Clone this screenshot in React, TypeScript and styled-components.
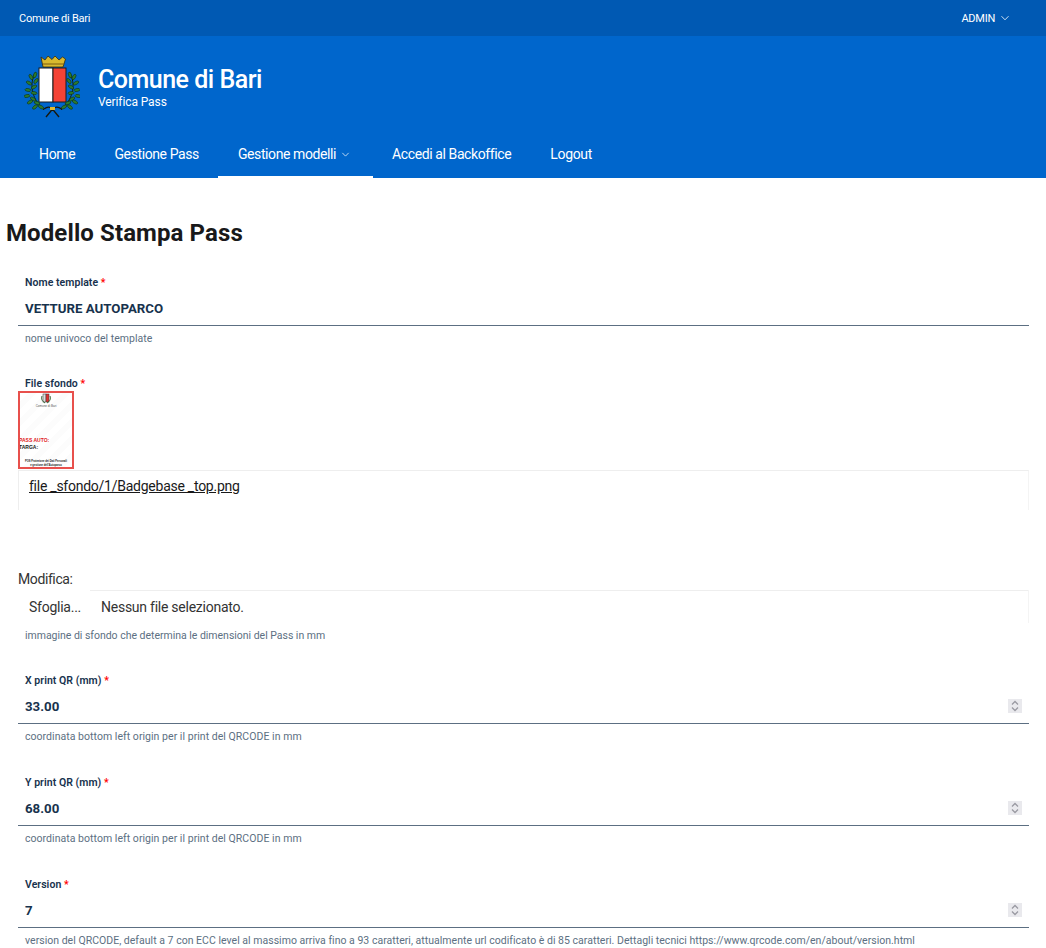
import React from 'react';
import styled, { createGlobalStyle } from 'styled-components';

const GlobalStyle = createGlobalStyle`
  html, body { margin: 0; padding: 0; background: #fff; }
  body {
    font-family: Roboto, "Open Sans", sans-serif;
    color: #19191a;
    height: 948px;
    overflow: hidden;
  }
`;

const SlimBar = styled.div`
  height: 36px;
  background: #0059b3;
  display: flex;
  align-items: center;
  justify-content: space-between;
  padding: 0 36px 0 19px;
  color: #fff;
  font-size: 11px;
  letter-spacing: -0.25px;
`;
const UserMenu = styled.div`
  display: flex;
  align-items: center;
  gap: 5px;
`;
const Brand = styled.div`
  height: 100px;
  background: #0066cc;
  display: flex;
  align-items: center;
  padding-left: 24px;
  gap: 18px;
  color: #fff;
`;
const BrandTitle = styled.div`
  font-size: 25px;
  font-weight: 500;
  line-height: 32px;
  letter-spacing: -0.5px;
  padding-top: 1px;
  margin-bottom: -1px;
`;
const BrandSub = styled.div`
  font-size: 12px;
  line-height: 14px;
  letter-spacing: -0.1px;
`;
const Nav = styled.nav`
  height: 42px;
  background: #0066cc;
  display: flex;
  padding-left: 19.5px;
`;
const NavItem = styled.a<{ $active?: boolean; $tight?: boolean }>`
  display: flex;
  align-items: center;
  gap: 5px;
  padding: 0 19.5px 4px;
  color: #fff;
  font-size: 14px;
  letter-spacing: ${({ $tight }) => ($tight ? '-0.4px' : '-0.3px')};
  border-bottom: 2px solid ${({ $active }) => ($active ? '#fff' : 'transparent')};
`;
const NavCaret = styled.span`
  display: flex;
  margin-right: 3px;
`;
const Main = styled.main`
  padding: 0 17px 0 18px;
`;
const Title = styled.h1`
  font-size: 24px;
  line-height: 30px;
  font-weight: 700;
  letter-spacing: 0.1px;
  margin: 40px 0 0 -12px;
  color: #19191a;
`;
const Field = styled.div<{ $gap: number }>`
  margin-top: ${({ $gap }) => $gap}px;
`;
const Label = styled.label`
  display: block;
  font-size: 10.5px;
  font-weight: 600;
  line-height: 14px;
  letter-spacing: 0.05px;
  color: #17324d;
  padding-left: 7px;
  span { color: #f00; }
`;
const ValueRow = styled.div`
  height: 34px;
  display: flex;
  align-items: center;
  justify-content: space-between;
  border-bottom: 1px solid #5c6f82;
  padding: 0 7px;
  margin-top: 1px;
`;
const Value = styled.span`
  font-size: 13.25px;
  font-weight: 700;
  color: #17324d;
`;
const Spinner = styled.span`
  width: 14px;
  height: 14px;
  background: #e9e9ed;
  display: flex;
  align-items: center;
  justify-content: center;
`;
const Help = styled.small<{ $spacing?: number }>`
  display: block;
  font-size: 10.5px;
  line-height: 14px;
  letter-spacing: ${({ $spacing = 0.04 }) => $spacing}px;
  color: #5c6f82;
  padding-left: 7px;
  margin-top: 6px;
  white-space: nowrap;
`;
const Thumb = styled.div`
  width: 56px;
  height: 78px;
  box-sizing: border-box;
  border: 2px solid #e8504c;
  background: repeating-linear-gradient(135deg, #fff 0 6px, #fcfcfc 6px 12px);
  display: flex;
  flex-direction: column;
  font-family: "Liberation Sans", sans-serif;
  font-weight: 700;
  font-size: 5px;
  line-height: 7px;
  overflow: hidden;
  white-space: nowrap;
`;
const ThumbCity = styled.div`
  text-align: center;
  font-size: 3px;
  line-height: 4px;
  font-weight: 400;
  color: #555;
`;
const ThumbCrest = styled.svg`
  display: block;
  margin: 0 auto;
`;
const ThumbPass = styled.div`
  color: #e02020;
  margin: 29px 0 0 -1px;
`;
const ThumbPlate = styled.div`
  margin-left: -1px;
`;
const ThumbFoot = styled.div`
  text-align: center;
  font-size: 2.6px;
  line-height: 3.5px;
  margin-top: 9px;
`;
const FileBox = styled.div`
  height: 33px;
  margin-top: 1px;
  border-top: 1px solid #eee;
  border-left: 1px solid #eee;
  border-right: 1px solid #f4f4f4;
  padding: 6px 0 0 10px;
  font-size: 14px;
  line-height: 18px;
  letter-spacing: -0.25px;
  color: #19191a;
  text-decoration: underline;
`;
const ModifyLabel = styled.div`
  font-size: 14px;
  line-height: 18px;
  letter-spacing: -0.4px;
  margin-top: 60px;
  color: #333;
`;
const FilePicker = styled.div`
  height: 33px;
  display: flex;
  align-items: center;
  border-right: 1px solid #f4f4f4;
  font-size: 14px;
  letter-spacing: -0.25px;
  color: #333;
  background: linear-gradient(#eee, #eee) 72px 0 / 100% 1px no-repeat;
  margin-top: 2px;
`;
const Browse = styled.span`
  padding-left: 11px;
  width: 72px;
  box-sizing: border-box;
`;
const NoFile = styled.span`
  padding-left: 11px;
`;

const Chevron = ({ size }: { size: number }) => (
  <svg width={size} height={size} viewBox="0 0 10 10" fill="none" stroke="#fff" strokeWidth="0.8">
    <path d="M1.5 3.2 5 6.8l3.5-3.6" />
  </svg>
);

const SpinIcon = () => (
  <Spinner>
    <svg width="8" height="12" viewBox="0 0 8 12" fill="none" stroke="#9a9aa2" strokeWidth="1.3">
      <path d="M1 4.5 4 1.5l3 3M1 7.5l3 3 3-3" />
    </svg>
  </Spinner>
);

// leaf positions of one laurel branch: x, y, angle
const leaves = [
  [11, 22, -70], [7, 24, -120], [12, 28, -50], [5, 30, -150], [10, 34, -30],
  [4, 37, -170], [10, 40, 10], [3, 43, 170], [9, 46, 30], [6, 49, 150], [13, 50, 20], [11, 54, 140], [17, 54, 30],
];

const Laurel = () => (
  <g>
    <path d="M11 20C6 30 6 44 20 57" fill="none" stroke="#10240c" strokeWidth="1" />
    {leaves.map(([x, y, a]) => (
      <ellipse key={`${x}-${y}`} cx={x} cy={y} rx="3" ry="1.5" fill="#2c7a2c" stroke="#0d2a0d" strokeWidth="0.5" transform={`rotate(${a} ${x} ${y})`} />
    ))}
  </g>
);

const Crest = () => (
  <svg width="56" height="66" viewBox="0 0 56 66">
    <path d="M17 4l4 3 3-4 4 3.5L31 3l4 4 3.5-3 3 2-2.5 8H19z" fill="#d9b92e" stroke="#3a2c05" strokeWidth="0.8" />
    <path d="M19 11h21" stroke="#7a5c10" strokeWidth="1" />
    <rect x="15" y="15" width="14" height="34" fill="#fff" stroke="#1a1a1a" strokeWidth="1" />
    <rect x="29" y="15" width="13" height="34" fill="#f44336" stroke="#1a1a1a" strokeWidth="1" />
    <Laurel />
    <g transform="translate(57 0) scale(-1 1)">
      <Laurel />
    </g>
    <g fill="none" stroke="#17180d" strokeWidth="1.4">
      <path d="M20 56c4-3 6-2 8.500 0 3-2 5-3 9 0M22 64l6.500-8 6.500 8" />
    </g>
    <path d="M26 54h5v3h-5z" fill="#e2b92f" />
  </svg>
);

const fields = [
  { label: 'X print QR (mm)', value: '33.00', gap: 31, help: <>coordinata bottom left origin per il print del QRCODE in mm</> },
  { label: 'Y print QR (mm)', value: '68.00', gap: 32, help: <>coordinata bottom left origin per il print del QRCODE in mm</> },
  {
    label: 'Version',
    value: '7',
    gap: 32,
    spacing: 0.02,
    help: (
      <>
        version del QRCODE, default a 7 con ECC level al massimo arriva fino a 93 caratteri, attualmente url codificato è di 85 caratteri.
        Dettagli tecnici https://www.qrcode.com/en/about/version.html
      </>
    ),
  },
];

const App = () => (
  <>
    <GlobalStyle />
    <SlimBar>
      <span>Comune di Bari</span>
      <UserMenu>
        ADMIN <Chevron size={10} />
      </UserMenu>
    </SlimBar>
    <Brand>
      <Crest />
      <div>
        <BrandTitle>Comune di Bari</BrandTitle>
        <BrandSub>Verifica Pass</BrandSub>
      </div>
    </Brand>
    <Nav>
      <NavItem>Home</NavItem>
      <NavItem $tight>Gestione Pass</NavItem>
      <NavItem $active $tight>
        Gestione modelli
        <NavCaret>
          <Chevron size={9} />
        </NavCaret>
      </NavItem>
      <NavItem $tight>Accedi al Backoffice</NavItem>
      <NavItem>Logout</NavItem>
    </Nav>
    <Main>
      <Title>Modello Stampa Pass</Title>
      <Field $gap={28}>
        <Label>
          Nome template <span>*</span>
        </Label>
        <ValueRow>
          <Value>VETTURE AUTOPARCO</Value>
        </ValueRow>
        <Help>nome univoco del template</Help>
      </Field>
      <Field $gap={31}>
        <Label>
          File sfondo <span>*</span>
        </Label>
        <Thumb>
          <ThumbCrest width="10" height="11" viewBox="0 0 10 11">
            <rect x="2" y="1" width="3" height="8" fill="#ddd" stroke="#333" strokeWidth="0.5" />
            <rect x="5" y="1" width="3" height="8" fill="#d33" stroke="#333" strokeWidth="0.5" />
            <path d="M1 3c-1 3 0 5 3 7M9 3c1 3 0 5-3 7" fill="none" stroke="#3a6b3a" strokeWidth="1" />
          </ThumbCrest>
          <ThumbCity>Comune di Bari</ThumbCity>
          <ThumbPass>PASS AUTO:</ThumbPass>
          <ThumbPlate>TARGA:</ThumbPlate>
          <ThumbFoot>
            POS Protezione dei Dati Personali
            <br />
            e gestione dell'Autoparco
          </ThumbFoot>
        </Thumb>
        <FileBox>file _sfondo/1/Badgebase _top.png</FileBox>
        <ModifyLabel>Modifica:</ModifyLabel>
        <FilePicker>
          <Browse>Sfoglia...</Browse>
          <NoFile>Nessun file selezionato.</NoFile>
        </FilePicker>
        <Help $spacing={-0.02}>immagine di sfondo che determina le dimensioni del Pass in mm</Help>
      </Field>
      {fields.map((f) => (
        <Field key={f.label} $gap={f.gap}>
          <Label>
            {f.label} <span>*</span>
          </Label>
          <ValueRow>
            <Value>{f.value}</Value>
            <SpinIcon />
          </ValueRow>
          <Help $spacing={f.spacing}>{f.help}</Help>
        </Field>
      ))}
    </Main>
  </>
);

export default App;
